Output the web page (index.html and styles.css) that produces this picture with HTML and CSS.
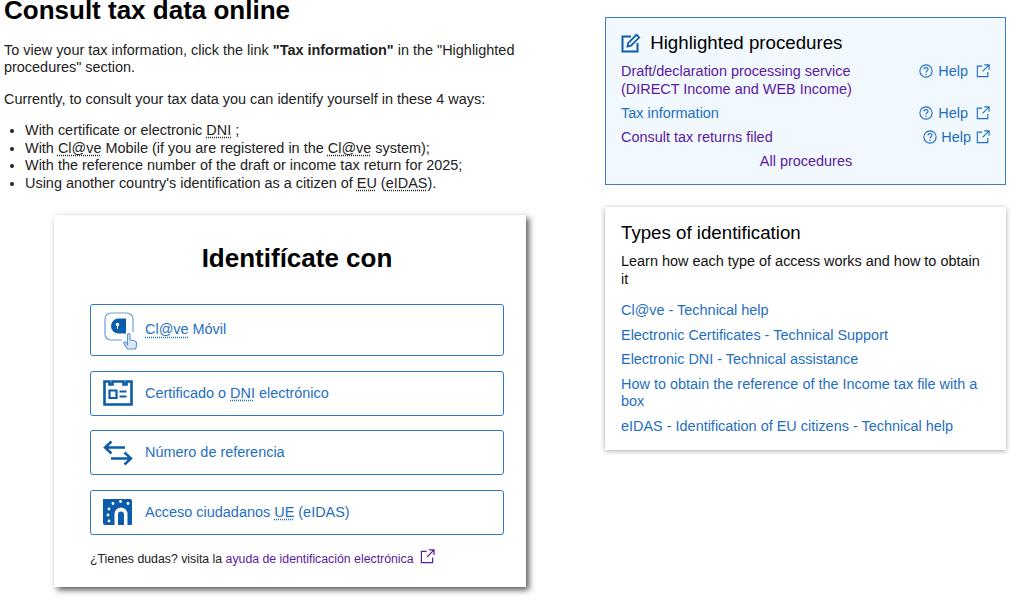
FILE: index.html
```html
<!DOCTYPE html>
<html lang="en">
<head>
    <meta charset="UTF-8">
    <meta name="viewport" content="width=device-width, initial-scale=1.0">
    <title>Consult tax data online</title>
    <link rel="stylesheet" href="styles.css">
</head>
<body>
    <svg class="sprites" width="0" height="0" aria-hidden="true">
        <symbol id="ext" viewBox="0 0 16 16">
            <path d="M7 2.500H1.500v12h12V9M9.500 1H15v5.500M15 1L7.500 8.500" fill="none" stroke="currentColor" stroke-width="1.300"/>
        </symbol>
        <symbol id="help" viewBox="0 0 16 16">
            <circle cx="8" cy="8" r="7" fill="none" stroke="currentColor" stroke-width="1.300"/>
            <path d="M5.700 6.200C5.700 3.500 10.300 3.500 10.300 6.100C10.300 7.800 8 7.700 8 9.800" fill="none" stroke="currentColor" stroke-width="1.300"/>
            <circle cx="8" cy="11.800" r=".9" fill="currentColor"/>
        </symbol>
    </svg>

    <div class="container">
        <main class="main-section">
            <h1>Consult tax data online</h1>
            <p>To view your tax information, click the link <strong>"Tax information"</strong> in the "Highlighted procedures" section.</p>
            <p>Currently, to consult your tax data you can identify yourself in these 4 ways:</p>
            <ul>
                <li>With certificate or electronic <abbr>DNI</abbr> ;</li>
                <li>With <abbr>Cl@ve</abbr> Mobile (if you are registered in the <abbr>Cl@ve</abbr> system);</li>
                <li>With the reference number of the draft or income tax return for 2025;</li>
                <li>Using another country's identification as a citizen of <abbr>EU</abbr> (<abbr>eIDAS</abbr>).</li>
            </ul>

            <div class="login-card">
                <h2>Identifícate con</h2>
                <a class="login-btn login-btn-tall" href="#">
                    <svg class="login-icon" width="36" height="42" viewBox="0 0 36 42">
                        <path d="M30 21V8a6 6 0 0 0-6-6H8a6 6 0 0 0-6 6v15a6 6 0 0 0 6 6h11" fill="none" stroke="#6d9fd8" stroke-width="1.200"/>
                        <path d="M8 15a7.500 7.500 0 0 1 7.500-7.500H23v15h-7.500A7.500 7.500 0 0 1 8 15z" fill="#0b5cab"/>
                        <circle cx="14.500" cy="13.500" r="1.700" fill="#fff"/>
                        <path d="M14 14h1v4h-1z" fill="#fff"/>
                        <path d="M24.500 38l-3.500-5.500c-.8-1.500 1-2.500 2-1l1.500 2V24c0-1.800 2.500-1.800 2.500 0v5c3 0 6.500.5 6.500 3v2.500c0 1.500-.5 2.500-1.500 3.500z" fill="#dbe8f6" stroke="#5a93d2" stroke-width="1.100"/>
                    </svg>
                    <span><abbr>Cl@ve</abbr> Móvil</span>
                </a>
                <a class="login-btn" href="#">
                    <svg class="login-icon" width="30" height="26" viewBox="0 0 30 26">
                        <path d="M1.500 1.500h5v3h3v-3h11v3h3v-3h5v23h-27z" fill="none" stroke="#0b5cab" stroke-width="2.600"/>
                        <path d="M6.500 10.500h7v7.500h-7z" fill="none" stroke="#0b5cab" stroke-width="2.200"/>
                        <path d="M16.500 11.500h7M16.500 16.500h7" stroke="#0b5cab" stroke-width="2.200"/>
                    </svg>
                    <span>Certificado o <abbr>DNI</abbr> electrónico</span>
                </a>
                <a class="login-btn" href="#">
                    <svg class="login-icon" width="30" height="26" viewBox="0 0 30 26">
                        <path d="M2 7.500h20M8.500 1.500L2 7.500l6.500 6M28 18.500H8M21.500 12.500l6.500 6-6.500 6" fill="none" stroke="#0b5cab" stroke-width="2.400"/>
                    </svg>
                    <span>Número de referencia</span>
                </a>
                <a class="login-btn" href="#">
                    <svg class="login-icon" width="30" height="28" viewBox="0 0 30 28">
                        <path d="M0 1h27a2 2 0 0 1 2 2v23a1 1 0 0 1-1 1H2a2 2 0 0 1-2-2z" fill="#0b5cab"/>
                        <path d="M11.500 27V16a6.500 6.500 0 0 1 13 0v11z" fill="#fff"/>
                        <path d="M15 27V16.500a3 3 0 0 1 6 0V27z" fill="#0b5cab"/>
                        <g fill="#fff">
                            <circle cx="10" cy="5.500" r="1.400"/><circle cx="17.500" cy="3.500" r="1.400"/><circle cx="25" cy="5.500" r="1.400"/>
                            <circle cx="6" cy="11" r="1.400"/><circle cx="5" cy="17" r="1.400"/><circle cx="6" cy="23" r="1.400"/>
                        </g>
                    </svg>
                    <span>Acceso ciudadanos <abbr>UE</abbr> (eIDAS)</span>
                </a>
                <p class="login-help">¿Tienes dudas? visita la <a class="visited" href="#">ayuda de identificación electrónica</a>
                    <svg class="login-help-ext" width="15" height="15"><use href="#ext"/></svg>
                </p>
            </div>
        </main>

        <aside class="side-section">
            <div class="panel panel-blue">
                <h3>
                    <svg class="panel-icon" width="20" height="20" viewBox="0 0 20 20">
                        <path d="M10 3.500H1.500v15h15V10" fill="none" stroke="#0b5cab" stroke-width="2"/>
                        <path d="M6.500 13.500l.8-3.500L15.500 1.800l2.700 2.700L10 12.700z" fill="none" stroke="#0b5cab" stroke-width="1.700"/>
                    </svg>
                    Highlighted procedures
                </h3>
                <div class="proc-row">
                    <a class="visited" href="#">Draft/declaration processing service (DIRECT Income and WEB Income)</a>
                    <span class="proc-help">
                        <svg width="14" height="14"><use href="#help"/></svg>
                        <a href="#">Help</a>
                        <svg class="proc-ext" width="14" height="14"><use href="#ext"/></svg>
                    </span>
                </div>
                <div class="proc-row">
                    <a href="#">Tax information</a>
                    <span class="proc-help">
                        <svg width="14" height="14"><use href="#help"/></svg>
                        <a href="#">Help</a>
                        <svg class="proc-ext" width="14" height="14"><use href="#ext"/></svg>
                    </span>
                </div>
                <div class="proc-row">
                    <a class="visited" href="#">Consult tax returns filed</a>
                    <span class="proc-help proc-help-tight">
                        <svg width="14" height="14"><use href="#help"/></svg>
                        <a href="#">Help</a>
                        <svg class="proc-ext" width="14" height="14"><use href="#ext"/></svg>
                    </span>
                </div>
                <a class="visited all-link" href="#">All procedures</a>
            </div>

            <div class="panel panel-plain">
                <h3>Types of identification</h3>
                <p class="panel-text">Learn how each type of access works and how to obtain it</p>
                <ul class="link-list">
                    <li><a href="#">Cl@ve - Technical help</a></li>
                    <li><a href="#">Electronic Certificates - Technical Support</a></li>
                    <li><a href="#">Electronic DNI - Technical assistance</a></li>
                    <li><a href="#">How to obtain the reference of the Income tax file with a box</a></li>
                    <li><a href="#">eIDAS - Identification of EU citizens - Technical help</a></li>
                </ul>
            </div>
        </aside>
    </div>
</body>
</html>
```

FILE: styles.css
```css
body {
    font-family: "Liberation Sans", Arial, sans-serif;
    font-size: 14.45px;
    line-height: 17.5px;
    color: #222;
    margin: 0;
}
a {
    color: #1f6fbf;
    text-decoration: none;
}
a.visited {
    color: #5b1a9e;
}
abbr {
    text-decoration: underline dotted;
    text-underline-offset: 2px;
}
.sprites {
    position: absolute;
}
.container {
    display: flex;
    align-items: flex-start;
}
.main-section {
    width: 530px;
    margin-left: 4px;
    margin-right: 71px;
    padding-bottom: 22px;
    flex: none;
}
.side-section {
    width: 401px;
    flex: none;
    padding-top: 17px;
}
h1 {
    font-size: 26px;
    line-height: 34px;
    color: #000;
    margin: -7px 0 0 0;
}
.main-section > p {
    margin: 14px 0;
}
.main-section > p:first-of-type {
    margin-top: 14.7px;
}
.main-section > ul {
    margin: 14px 0 0 0;
    padding-left: 21px;
}
.login-card {
    width: 472px;
    box-sizing: border-box;
    height: 372px;
    margin: 23px 0 0 50px;
    padding: 0 22px 0 36px;
    background: #fff;
    box-shadow: 3px 3px 6px rgba(0,0,0,0.65);
}
.login-card h2 {
    font-size: 26px;
    line-height: 30px;
    color: #000;
    text-align: center;
    margin: 0;
    padding: 28px 0 31px 0;
}
.login-btn {
    display: flex;
    align-items: center;
    height: 45px;
    box-sizing: border-box;
    border: 1px solid #2f78c4;
    border-radius: 3px;
    margin-bottom: 14.6px;
}
.login-btn-tall {
    height: 52px;
}
.login-icon {
    flex: none;
    margin-left: 12px;
    margin-right: 12px;
}
.login-btn-tall .login-icon {
    margin-right: 6px;
    margin-top: 4px;
}
.login-help {
    font-size: 12.3px;
    color: #222;
    margin: -1px 0 0 0;
}
.login-help-ext {
    color: #5b1a9e;
    margin-left: 3px;
    vertical-align: -1px;
}
.panel {
    background: #fff;
    margin-bottom: 22px;
}
.panel-blue {
    background: #f1f8fe;
    border: 1px solid #3d7fc4;
    padding: 14px 15px 12.8px 15px;
}
.panel-plain {
    padding: 15.7px 16px 7.3px 16px;
    box-shadow: 0 1px 5px rgba(0,0,0,0.35);
}
.panel h3 {
    font-size: 18.7px;
    line-height: 22px;
    font-weight: normal;
    color: #000;
    margin: 0 0 9px 0;
}
.panel-icon {
    vertical-align: -4px;
    margin-right: 4px;
}
.proc-row {
    display: flex;
    justify-content: space-between;
    margin-bottom: 6.8px;
}
.proc-row > a {
    width: 245px;
}
.proc-help {
    color: #1f6fbf;
    display: flex;
    align-items: flex-start;
    gap: 5px;
}
.proc-help svg {
    margin-top: 1px;
}
.proc-ext {
    margin-left: 3px;
}
.proc-help-tight {
    gap: 4px;
}
.proc-help-tight .proc-ext {
    margin-left: 1px;
}
.all-link {
    display: block;
    text-align: center;
    width: 245px;
    margin: 1.6px auto 0 auto;
    padding-left: 1px;
}
.panel-text {
    color: #111;
    margin: 0 0 13.9px 0;
}
.link-list {
    list-style: none;
    margin: 0;
    padding: 0;
}
.link-list li {
    margin-bottom: 7px;
}
```
